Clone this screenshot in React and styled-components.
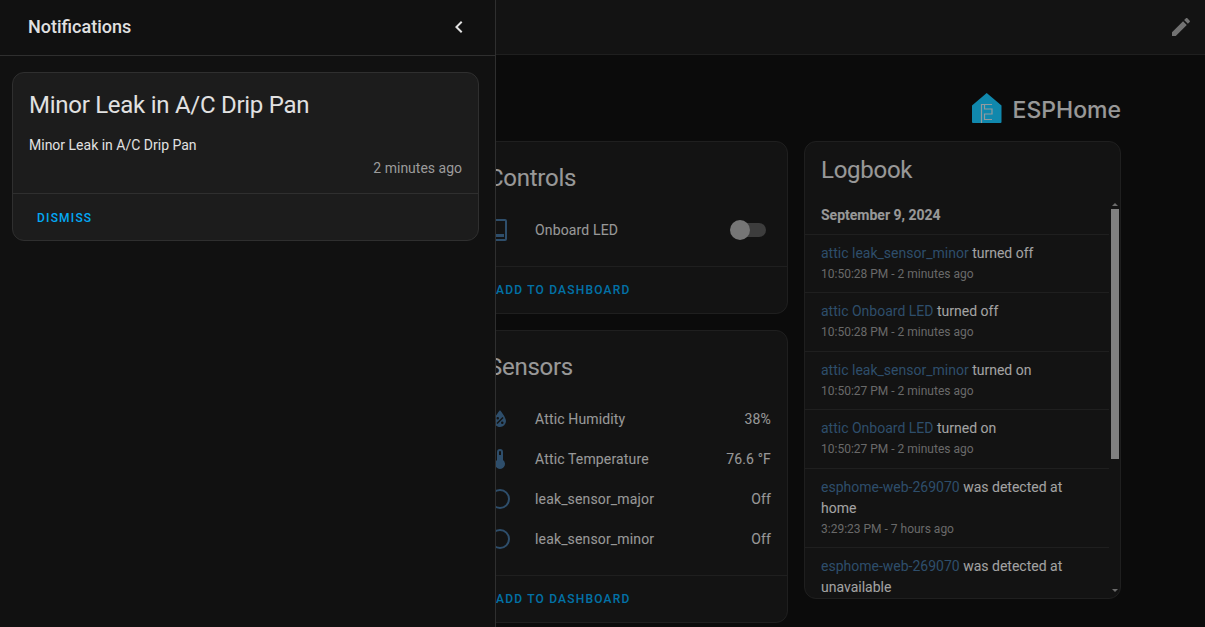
import React from "react";
import styled, { createGlobalStyle } from "styled-components";

const GlobalStyle = createGlobalStyle`
  html, body {
    margin: 0;
    height: 100%;
    overflow: hidden;
    background: #111111;
    font-family: Roboto, "Liberation Sans", sans-serif;
    color: #e1e1e1;
  }
  * { box-sizing: border-box; }
`;

const Page = styled.div`
  height: 627px;
  overflow: hidden;
`;

const TopBar = styled.header`
  height: 55px;
  display: flex;
  align-items: center;
  justify-content: flex-end;
  padding-right: 12px;
  background: #1c1c1c;
  border-bottom: 1px solid #2f2f2f;
`;

const EditIcon = styled.svg`
  width: 24px;
  height: 24px;
  fill: #a8a8a8;
`;

const Content = styled.main`
  padding: 38px 84px 0 0;
`;

const LogoRow = styled.div`
  height: 48px;
  display: flex;
  justify-content: flex-end;
  align-items: flex-start;
  gap: 11px;
`;

const LogoText = styled.span`
  font-family: Inter, "Open Sans", sans-serif;
  font-size: 23px;
  line-height: 34px;
  font-weight: 500;
  color: #e0e0e0;
`;

const Columns = styled.div`
  display: flex;
  justify-content: flex-end;
  gap: 16px;
`;

const Column = styled.div`
  width: 317px;
  display: flex;
  flex-direction: column;
  gap: 16px;
`;

const Card = styled.section`
  background: #1c1c1c;
  border: 1px solid #2f2f2f;
  border-radius: 12px;
  overflow: hidden;
`;

const CardTitle = styled.h2`
  margin: 0;
  padding: ${({ $compact }) => ($compact ? "4px" : "12px")} 16px 8px;
  font-size: 24px;
  font-weight: 400;
  line-height: 48px;
  letter-spacing: -0.27px;
  color: #e1e1e1;
`;

const CardBody = styled.div`
  padding: 0 16px 16px;
`;

const EntityRow = styled.div`
  height: 40px;
  display: flex;
  align-items: center;
  font-size: 14px;
  letter-spacing: 0.15px;
  color: #e1e1e1;
`;

const EntityIcon = styled.svg`
  width: 24px;
  height: 24px;
  margin-right: 23px;
  fill: #44739e;
  fill-rule: evenodd;
  flex: none;
`;

const EntityName = styled.span`
  flex: 1;
`;

const Toggle = styled.span`
  width: 28px;
  height: 14px;
  margin-right: 5px;
  border-radius: 7px;
  background: #5a5a5a;
  display: flex;
  align-items: center;
`;

const ToggleThumb = styled.span`
  width: 20px;
  height: 20px;
  margin-left: -8px;
  border-radius: 50%;
  background: #aeaeae;
`;

const CardActions = styled.div`
  height: 47px;
  flex: none;
  display: flex;
  align-items: center;
  padding-left: 24px;
  border-top: 1px solid #2f2f2f;
`;

const NoticeActions = styled(CardActions)`
  padding-top: 2px;
`;

const ActionButton = styled.span`
  font-size: 12px;
  font-weight: 500;
  letter-spacing: 1.2px;
  text-transform: uppercase;
  color: #03a9f4;
`;

const LogbookCard = styled(Card)`
  height: 458px;
  display: flex;
  flex-direction: column;
`;

const LogbookBody = styled.div`
  flex: 1;
  min-height: 0;
  display: flex;
`;

const LogList = styled.div`
  width: 304px;
  overflow: hidden;
`;

const DateRow = styled.div`
  height: 33px;
  padding: 0 16px 6px;
  display: flex;
  align-items: center;
  font-size: 14px;
  font-weight: 700;
  color: #e1e1e1;
  border-bottom: 1px solid #2f2f2f;
`;

const LogEntry = styled.div`
  padding: 8px 16px 0;
  min-height: 58.4px;
  border-bottom: 1px solid #2f2f2f;
`;

const LogMessage = styled.div`
  font-size: 14px;
  line-height: 21px;
  color: #f0f0f0;
`;

const EntityLink = styled.span`
  color: #44739e;
`;

const LogTime = styled.div`
  font-size: 12px;
  line-height: 20px;
  color: #9b9b9b;
  padding-bottom: 8px;
`;

const ScrollTrack = styled.div`
  width: 8px;
  margin-left: 2px;
  padding-top: 1px;
  display: flex;
  flex-direction: column;
  align-items: center;
`;

const ScrollArrow = styled.span`
  width: 0;
  height: 0;
  border-left: 3px solid transparent;
  border-right: 3px solid transparent;
  border-${({ $down }) => ($down ? "top" : "bottom")}: 3px solid #9e9e9e;
`;

const ScrollThumb = styled.div`
  width: 8px;
  height: 250px;
  margin: 3px 0 130px;
  background: #bdbdbd;
`;

const Scrim = styled.div`
  position: fixed;
  inset: 0;
  background: rgba(0, 0, 0, 0.32);
`;

const Drawer = styled.aside`
  position: fixed;
  top: 0;
  left: 0;
  bottom: 0;
  width: 496px;
  background: #111111;
  border-right: 1px solid #2f2f2f;
`;

const DrawerHeader = styled.div`
  height: 56px;
  display: flex;
  align-items: center;
  justify-content: space-between;
  padding: 0 24px 2px 28px;
  border-bottom: 1px solid #2f2f2f;
`;

const DrawerTitle = styled.span`
  font-size: 18px;
  font-weight: 500;
  color: #e1e1e1;
`;

const BackIcon = styled.svg`
  width: 24px;
  height: 24px;
  fill: #e1e1e1;
`;

const DrawerBody = styled.div`
  padding: 16px 16px 0 12px;
`;

const NoticeCard = styled(Card)`
  height: 169px;
`;

const NoticeTitle = styled.h3`
  margin: 0;
  padding: 16px 16px 0;
  font-size: 24px;
  font-weight: 400;
  line-height: 32px;
  letter-spacing: -0.27px;
  color: #e1e1e1;
`;

const NoticeMessage = styled.p`
  margin: 0;
  padding: 12px 16px 0;
  font-size: 14px;
  line-height: 24px;
  color: #e1e1e1;
`;

const NoticeTime = styled.div`
  padding: 0 16px;
  text-align: right;
  font-size: 14px;
  line-height: 22px;
  color: #9b9b9b;
  height: 36px;
`;

const icons = {
  tablet: "M7 1H17A2 2 0 0 1 19 3V21A2 2 0 0 1 17 23H7A2 2 0 0 1 5 21V3A2 2 0 0 1 7 1ZM7 3V21H17V3ZM8 16H16V19H8Z",
  humidity:
    "M12,3.25C12,3.25 6,10 6,14C6,17.32 8.69,20 12,20A6,6 0 0,0 18,14C18,10 12,3.25 12,3.25M14.47,9.97L15.53,11.03L9.53,17.03L8.47,15.97M9.75,10A1.25,1.25 0 0,1 11,11.25A1.25,1.25 0 0,1 9.75,12.5A1.25,1.25 0 0,1 8.5,11.25A1.25,1.25 0 0,1 9.75,10M14.25,14.5A1.25,1.25 0 0,1 15.5,15.75A1.25,1.25 0 0,1 14.25,17A1.25,1.25 0 0,1 13,15.75A1.25,1.25 0 0,1 14.25,14.5Z",
  thermometer: "M15 13V5A3 3 0 0 0 9 5V13A5 5 0 1 0 15 13M12 4A1 1 0 0 1 13 5V8H11V5A1 1 0 0 1 12 4Z",
  circle:
    "M12,20A8,8 0 0,1 4,12A8,8 0 0,1 12,4A8,8 0 0,1 20,12A8,8 0 0,1 12,20M12,2A10,10 0 0,0 2,12A10,10 0 0,0 12,22A10,10 0 0,0 22,12A10,10 0 0,0 12,2Z",
};

const sensors = [
  { name: "Attic Humidity", value: "38%", icon: "humidity" },
  { name: "Attic Temperature", value: "76.6 °F", icon: "thermometer" },
  { name: "leak_sensor_major", value: "Off", icon: "circle" },
  { name: "leak_sensor_minor", value: "Off", icon: "circle" },
];

// the last entry runs off the bottom of the list, so its time never shows
const logEntries = [
  { entity: "attic leak_sensor_minor", text: "turned off", time: "10:50:28 PM - 2 minutes ago" },
  { entity: "attic Onboard LED", text: "turned off", time: "10:50:28 PM - 2 minutes ago" },
  { entity: "attic leak_sensor_minor", text: "turned on", time: "10:50:27 PM - 2 minutes ago" },
  { entity: "attic Onboard LED", text: "turned on", time: "10:50:27 PM - 2 minutes ago" },
  { entity: "esphome-web-269070", text: "was detected at home", time: "3:29:23 PM - 7 hours ago" },
  { entity: "esphome-web-269070", text: "was detected at unavailable" },
];

const EspHomeLogo = () => (
  <svg width="30" height="30" viewBox="0 0 30 30">
    <path d="M14.7 0L29.5 12.5V29A1 1 0 0 1 28.5 30H1A1 1 0 0 1 0 29V12.5Z" fill="#19c9ff" />
    <path
      d="M9.5 30V11.5H20M12.5 11.5V16H20V21H12.5V26.5H20"
      fill="none"
      stroke="#d8e4ea"
      strokeWidth="1.2"
    />
  </svg>
);

export default function App() {
  return (
    <Page>
      <GlobalStyle />
      <TopBar>
        <EditIcon viewBox="0 0 24 24">
          <path d="M20.71,7.04C21.1,6.65 21.1,6 20.71,5.63L18.37,3.29C18,2.9 17.35,2.9 16.96,3.29L15.12,5.12L18.87,8.87M3,17.25V21H6.75L17.81,9.93L14.06,6.18L3,17.25Z" />
        </EditIcon>
      </TopBar>
      <Content>
        <LogoRow>
          <EspHomeLogo />
          <LogoText>ESPHome</LogoText>
        </LogoRow>
        <Columns>
          <Column>
            <Card>
              <CardTitle>Controls</CardTitle>
              <CardBody>
                <EntityRow>
                  <EntityIcon viewBox="0 0 24 24">
                    <path d={icons.tablet} />
                  </EntityIcon>
                  <EntityName>Onboard LED</EntityName>
                  <Toggle>
                    <ToggleThumb />
                  </Toggle>
                </EntityRow>
              </CardBody>
              <CardActions>
                <ActionButton>Add to dashboard</ActionButton>
              </CardActions>
            </Card>
            <Card>
              <CardTitle>Sensors</CardTitle>
              <CardBody>
                {sensors.map((s) => (
                  <EntityRow key={s.name}>
                    <EntityIcon viewBox="0 0 24 24">
                      <path d={icons[s.icon]} />
                    </EntityIcon>
                    <EntityName>{s.name}</EntityName>
                    <span>{s.value}</span>
                  </EntityRow>
                ))}
              </CardBody>
              <CardActions>
                <ActionButton>Add to dashboard</ActionButton>
              </CardActions>
            </Card>
          </Column>
          <Column>
            <LogbookCard>
              <CardTitle $compact>Logbook</CardTitle>
              <LogbookBody>
                <LogList>
                  <DateRow>September 9, 2024</DateRow>
                  {logEntries.map((e, i) => (
                    <LogEntry key={i}>
                      <LogMessage>
                        <EntityLink>{e.entity}</EntityLink> {e.text}
                      </LogMessage>
                      {e.time && <LogTime>{e.time}</LogTime>}
                    </LogEntry>
                  ))}
                </LogList>
                <ScrollTrack>
                  <ScrollArrow />
                  <ScrollThumb />
                  <ScrollArrow $down />
                </ScrollTrack>
              </LogbookBody>
            </LogbookCard>
          </Column>
        </Columns>
      </Content>
      <Scrim />
      <Drawer>
        <DrawerHeader>
          <DrawerTitle>Notifications</DrawerTitle>
          <BackIcon viewBox="0 0 24 24">
            <path d="M15.41,16.58L10.83,12L15.41,7.41L14,6L8,12L14,18L15.41,16.58Z" />
          </BackIcon>
        </DrawerHeader>
        <DrawerBody>
          <NoticeCard>
            <NoticeTitle>Minor Leak in A/C Drip Pan</NoticeTitle>
            <NoticeMessage>Minor Leak in A/C Drip Pan</NoticeMessage>
            <NoticeTime>2 minutes ago</NoticeTime>
            <NoticeActions>
              <ActionButton>Dismiss</ActionButton>
            </NoticeActions>
          </NoticeCard>
        </DrawerBody>
      </Drawer>
    </Page>
  );
}
